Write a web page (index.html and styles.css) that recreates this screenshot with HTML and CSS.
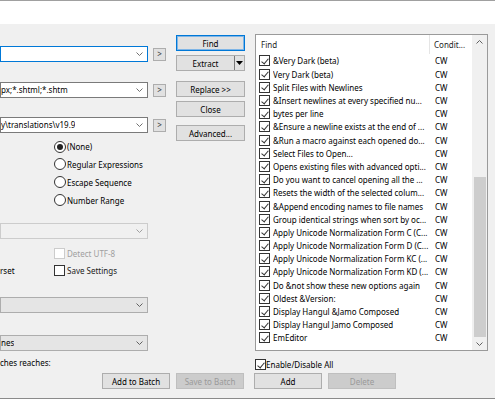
FILE: index.html
```html
<!DOCTYPE html>
<html>
<head>
<meta charset="utf-8">
<link rel="stylesheet" href="styles.css">
</head>
<body>
<div class="topband"></div>
<div class="dialog">
  <div class="main">
    <div class="left">
      <div class="crow r1">
        <div class="combo focus"><span class="ctext"></span><svg class="chev" width="7" height="4" viewBox="0 0 7 4"><polyline points="0.5,0.5 3.5,3.5 6.5,0.5" fill="none" stroke="#707070" stroke-width="1"/></svg></div>
        <div class="arrowbtn">&gt;</div>
      </div>
      <div class="crow r2">
        <div class="combo"><span class="ctext">px;*.shtml;*.shtm</span><svg class="chev" width="7" height="4" viewBox="0 0 7 4"><polyline points="0.5,0.5 3.5,3.5 6.5,0.5" fill="none" stroke="#707070" stroke-width="1"/></svg></div>
        <div class="arrowbtn">&gt;</div>
      </div>
      <div class="crow r3">
        <div class="combo"><span class="ctext">y\translations\v19.9</span><svg class="chev" width="7" height="4" viewBox="0 0 7 4"><polyline points="0.5,0.5 3.5,3.5 6.5,0.5" fill="none" stroke="#707070" stroke-width="1"/></svg></div>
        <div class="arrowbtn">&gt;</div>
      </div>
      <div class="radios">
        <div class="radio first"><span class="rb on"></span><span>(None)</span></div>
        <div class="radio"><span class="rb"></span><span>Regular Expressions</span></div>
        <div class="radio"><span class="rb"></span><span>Escape Sequence</span></div>
        <div class="radio"><span class="rb"></span><span>Number Range</span></div>
      </div>
      <div class="combo disabled r4"><span class="ctext"></span><svg class="chev" width="7" height="4" viewBox="0 0 7 4"><polyline points="0.5,0.5 3.5,3.5 6.5,0.5" fill="none" stroke="#a0a0a0" stroke-width="1"/></svg></div>
      <div class="chkrow r5"><span class="lbl"></span><span class="cb dis"></span><span class="distext">Detect UTF-8</span></div>
      <div class="chkrow r6"><span class="lbl">rset</span><span class="cb"></span><span class="savetext">Save Settings</span></div>
      <div class="combo droplist r7"><span class="ctext"></span><svg class="chev" width="7" height="4" viewBox="0 0 7 4"><polyline points="0.5,0.5 3.5,3.5 6.5,0.5" fill="none" stroke="#606060" stroke-width="1"/></svg></div>
      <div class="combo droplist r8"><span class="ctext">nes</span><svg class="chev" width="7" height="4" viewBox="0 0 7 4"><polyline points="0.5,0.5 3.5,3.5 6.5,0.5" fill="none" stroke="#606060" stroke-width="1"/></svg></div>
      <div class="note">ches reaches:</div>
    </div>
    <div class="btncol">
      <div class="btn default b1">Find</div>
      <div class="btn split b2"><span class="splitlabel">Extract</span><span class="splitdrop"><svg width="7" height="4" viewBox="0 0 7 4"><polygon points="0,0 7,0 3.5,4" fill="#000"/></svg></span></div>
      <div class="btn b3">Replace &gt;&gt;</div>
      <div class="btn b4">Close</div>
      <div class="btn b5">Advanced...</div>
    </div>
    <div class="right">
      <div class="listview">
        <div class="cols">
          <div class="lhead"><div class="hc1">Find</div><div class="hc2">Condit...</div></div>
          <div class="rows">
            <div class="row"><span class="lcb"></span><span class="c1">&amp;Very Dark (beta)</span><span class="c2">CW</span></div>
            <div class="row"><span class="lcb"></span><span class="c1">Very Dark (beta)</span><span class="c2">CW</span></div>
            <div class="row"><span class="lcb"></span><span class="c1">Split Files with Newlines</span><span class="c2">CW</span></div>
            <div class="row"><span class="lcb"></span><span class="c1">&amp;Insert newlines at every specified nu...</span><span class="c2">CW</span></div>
            <div class="row"><span class="lcb"></span><span class="c1">bytes per line</span><span class="c2">CW</span></div>
            <div class="row"><span class="lcb"></span><span class="c1">&amp;Ensure a newline exists at the end of ...</span><span class="c2">CW</span></div>
            <div class="row"><span class="lcb"></span><span class="c1">&amp;Run a macro against each opened do...</span><span class="c2">CW</span></div>
            <div class="row"><span class="lcb"></span><span class="c1">Select Files to Open...</span><span class="c2">CW</span></div>
            <div class="row"><span class="lcb"></span><span class="c1">Opens existing files with advanced opti...</span><span class="c2">CW</span></div>
            <div class="row"><span class="lcb"></span><span class="c1">Do you want to cancel opening all the ...</span><span class="c2">CW</span></div>
            <div class="row"><span class="lcb"></span><span class="c1">Resets the width of the selected colum...</span><span class="c2">CW</span></div>
            <div class="row"><span class="lcb"></span><span class="c1">&amp;Append encoding names to file names</span><span class="c2">CW</span></div>
            <div class="row"><span class="lcb"></span><span class="c1">Group identical strings when sort by oc...</span><span class="c2">CW</span></div>
            <div class="row"><span class="lcb"></span><span class="c1">Apply Unicode Normalization Form C (C...</span><span class="c2">CW</span></div>
            <div class="row"><span class="lcb"></span><span class="c1">Apply Unicode Normalization Form D (C...</span><span class="c2">CW</span></div>
            <div class="row"><span class="lcb"></span><span class="c1">Apply Unicode Normalization Form KC (...</span><span class="c2">CW</span></div>
            <div class="row"><span class="lcb"></span><span class="c1">Apply Unicode Normalization Form KD (...</span><span class="c2">CW</span></div>
            <div class="row"><span class="lcb"></span><span class="c1">Do &amp;not show these new options again</span><span class="c2">CW</span></div>
            <div class="row"><span class="lcb"></span><span class="c1">Oldest &amp;Version:</span><span class="c2">CW</span></div>
            <div class="row"><span class="lcb"></span><span class="c1">Display Hangul &amp;Jamo Composed</span><span class="c2">CW</span></div>
            <div class="row"><span class="lcb"></span><span class="c1">Display Hangul Jamo Composed</span><span class="c2">CW</span></div>
            <div class="row"><span class="lcb"></span><span class="c1">EmEditor</span><span class="c2">CW</span></div>
          </div>
        </div>
        <div class="vscroll">
          <div class="sbtn up"><svg width="7" height="4" viewBox="0 0 7 4"><polyline points="0.5,3.5 3.5,0.5 6.5,3.5" fill="none" stroke="#606060" stroke-width="1"/></svg></div>
          <div class="track"><div class="thumb"></div></div>
          <div class="sbtn down"><svg width="7" height="4" viewBox="0 0 7 4"><polyline points="0.5,0.5 3.5,3.5 6.5,0.5" fill="none" stroke="#606060" stroke-width="1"/></svg></div>
        </div>
      </div>
      <div class="allrow"><span class="lcb"></span><span>Enable/Disable All</span></div>
    </div>
  </div>
  <div class="bottomrow">
    <div class="btn">Add to Batch</div>
    <div class="btn disabledbtn">Save to Batch</div>
    <div class="btn addbtn">Add</div>
    <div class="btn disabledbtn">Delete</div>
  </div>
</div>
<div class="footband"></div>
</body>
</html>
```
FILE: styles.css
```css
html, body {
  margin: 0;
  padding: 0;
}
body {
  width: 495px;
  height: 400px;
  overflow: hidden;
  background: #f0f0f0;
  font-family: "Noto Sans", "Liberation Sans", sans-serif;
  font-size: 8px;
  color: #000;
}
.topband {
  height: 24px;
  box-sizing: border-box;
  border-top: 1px solid #a0a0a0;
  background: #fff;
}
.dialog {
  height: 374px;
  box-sizing: border-box;
  padding-top: 10px;
  background: #f0f0f0;
}
.main {
  display: grid;
  grid-template-columns: 166px 69px 233px;
  column-gap: 10px;
  height: 339px;
}
.left {
  display: flex;
  flex-direction: column;
}
.crow {
  display: flex;
  align-items: center;
  height: 16px;
}
.r1 { margin-top: 12px; }
.r2 { margin-top: 20px; }
.r3 { margin-top: 19px; }
.combo {
  width: 148px;
  height: 16px;
  box-sizing: border-box;
  border: 1px solid #7a7a7a;
  background: #fff;
  display: flex;
  align-items: center;
  justify-content: space-between;
  padding-right: 4px;
}
.combo.focus { border-color: #0078d7; }
.combo.disabled { background: #f0f0f0; border-color: #cccccc; margin-top: 14px; }
.combo.droplist { background: #e5e5e5; border-color: #adadad; }
.ctext {
  white-space: nowrap;
  overflow: hidden;
  padding-left: 0;
  line-height: 14px;
}
.chev { flex: none; }
.arrowbtn {
  margin-left: 5px;
  width: 13px;
  height: 13px;
  box-sizing: border-box;
  border: 1px solid #adadad;
  background: #e1e1e1;
  display: flex;
  align-items: center;
  justify-content: center;
  font-size: 8px;
  color: #333;
  line-height: 1;
}
.radios {
  margin-top: 5px;
  padding-left: 54px;
  display: flex;
  flex-direction: column;
}
.radio {
  height: 18px;
  display: flex;
  align-items: center;
}
.radio.first { height: 17px; }
.rb {
  width: 12px;
  height: 12px;
  box-sizing: border-box;
  border: 1px solid #333;
  border-radius: 50%;
  background: #fff;
  margin-right: 1px;
  display: flex;
  align-items: center;
  justify-content: center;
  flex: none;
}
.rb.on::after {
  content: "";
  width: 6px;
  height: 6px;
  border-radius: 50%;
  background: #222;
}
.chkrow {
  display: flex;
  align-items: center;
  height: 14px;
}
.r5 { margin-top: 7px; }
.r6 { margin-top: 3px; }
.lbl {
  width: 54px;
  flex: none;
  white-space: nowrap;
}
.cb {
  width: 11px;
  height: 11px;
  box-sizing: border-box;
  border: 1px solid #333;
  background: #fff;
  margin-right: 2px;
  flex: none;
}
.cb.dis { border-color: #cccccc; }
.distext { color: #a0a0a0; }
.savetext { color: #222; }
.r7 { margin-top: 20px; }
.r8 { margin-top: 22px; }
.note {
  margin-top: 6px;
  height: 12px;
  line-height: 12px;
  white-space: nowrap;
}
.btncol {
  display: flex;
  flex-direction: column;
}
.btn {
  width: 69px;
  height: 16px;
  box-sizing: border-box;
  border: 1px solid #adadad;
  background: #e1e1e1;
  display: flex;
  align-items: center;
  justify-content: center;
  white-space: nowrap;
}
.btn.default { border-color: #0078d7; box-shadow: inset 0 0 0 1px #7fb5e6; }
.b1 { margin-top: 1px; }
.b2 { margin-top: 4px; }
.b3 { margin-top: 10px; }
.b4 { margin-top: 4px; }
.b5 { margin-top: 8px; }
.btn.split { justify-content: flex-start; }
.splitlabel {
  width: 57px;
  text-align: center;
}
.splitdrop {
  flex: 1;
  height: 100%;
  border-left: 1px solid #7a7a7a;
  display: flex;
  align-items: center;
  justify-content: center;
}
.right {
  display: flex;
  flex-direction: column;
}
.listview {
  height: 317px;
  box-sizing: border-box;
  border: 1px solid #9a9a9a;
  background: #fff;
  display: flex;
}
.cols {
  width: 216px;
  display: flex;
  flex-direction: column;
}
.lhead {
  height: 19.4px;
  display: flex;
  align-items: center;
}
.hc1 {
  width: 174px;
  box-sizing: border-box;
  padding-left: 5px;
  height: 100%;
  display: flex;
  align-items: center;
  border-right: 1px solid #e5e5e5;
  color: #1e1e1e;
}
.hc2 {
  padding-left: 4px;
  color: #1e1e1e;
}
.row {
  height: 13.2px;
  display: flex;
  align-items: center;
  white-space: nowrap;
}
.lcb {
  width: 11px;
  height: 11px;
  box-sizing: border-box;
  border: 1px solid #333;
  background: #fff;
  flex: none;
  position: relative;
}
.lcb::after {
  content: "";
  position: absolute;
  left: 2.5px;
  top: 0.5px;
  width: 3px;
  height: 6px;
  border: solid #333;
  border-width: 0 1px 1px 0;
  transform: rotate(40deg);
}
.row .lcb { margin-left: 3px; }
.c1 {
  width: 157px;
  margin-left: 3px;
  overflow: hidden;
}
.c2 {
  padding-left: 5px;
}
.vscroll {
  width: 15px;
  background: #f0f0f0;
  display: flex;
  flex-direction: column;
}
.sbtn {
  display: flex;
  align-items: center;
  justify-content: center;
}
.sbtn.up { height: 15px; }
.sbtn.down { height: 13px; }
.track {
  flex: 1;
  padding: 0 1.5px;
}
.thumb {
  margin-top: 128px;
  height: 160px;
  background: #cdcdcd;
}
.allrow {
  margin-top: 8px;
  display: flex;
  align-items: center;
  height: 11px;
  white-space: nowrap;
}
.allrow .lcb { margin-right: 0; }
.bottomrow {
  display: flex;
  padding-left: 102px;
  margin-top: 0;
}
.bottomrow .btn { width: 68px; margin-right: 6px; }
.bottomrow .addbtn { margin-left: 4px; }
.btn.disabledbtn {
  background: #cccccc;
  border-color: #bfbfbf;
  color: #9a9a9a;
}
.footband {
  height: 2px;
  box-sizing: border-box;
  border-top: 1px solid #8a8a8a;
  background: #fff;
}
```
